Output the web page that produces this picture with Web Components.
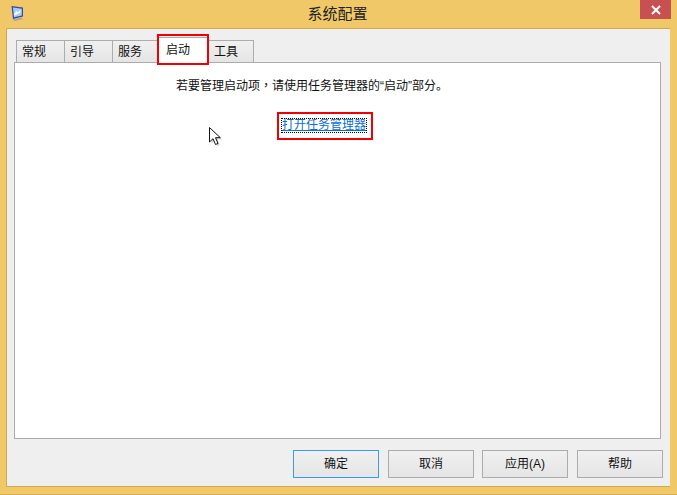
<!DOCTYPE html>
<html lang="zh-CN">
<head>
<meta charset="utf-8">
<title>系统配置</title>
<style>
  html, body { margin: 0; padding: 0; }
  body { width: 677px; height: 495px; overflow: hidden; font: 12px "Liberation Sans", "Noto Sans CJK SC", sans-serif; color: #111; }
</style>
</head>
<body>
<config-window caption="系统配置">
  <tab-strip slot="tabs">
    <tab-item>常规</tab-item>
    <tab-item>引导</tab-item>
    <tab-item>服务</tab-item>
    <tab-item selected marked>启动</tab-item>
    <tab-item>工具</tab-item>
  </tab-strip>
  <startup-panel slot="panel"></startup-panel>
  <dialog-button slot="buttons" primary>确定</dialog-button>
  <dialog-button slot="buttons">取消</dialog-button>
  <dialog-button slot="buttons">应用(A)</dialog-button>
  <dialog-button slot="buttons">帮助</dialog-button>
</config-window>

<script>
class ConfigWindow extends HTMLElement {
    constructor() {
        super();
        this.attachShadow({ mode: 'open' });
    }

    connectedCallback() {
        this.shadowRoot.innerHTML = `
            <style>
                :host {
                    display: flex;
                    flex-direction: column;
                    width: 677px;
                    height: 495px;
                    box-sizing: border-box;
                    background: #f0c868;
                    border-bottom: 1px solid #d8ae55;
                }
                .title {
                    display: flex;
                    align-items: flex-start;
                    height: 28px;
                    flex: none;
                }
                .icon { width: 16px; height: 17px; margin: 5px 0 0 9px; flex: none; }
                .caption {
                    flex: 1;
                    text-align: center;
                    font-size: 15px;
                    line-height: 27px;
                    color: #222;
                    padding-left: 10px;
                }
                .close {
                    width: 31px;
                    height: 19px;
                    margin-right: 6px;
                    flex: none;
                    background: #c75050;
                    display: flex;
                    align-items: center;
                    justify-content: center;
                }
                .client {
                    flex: none;
                    height: 459px;
                    margin: 0 7px 0 6px;
                    box-sizing: border-box;
                    background: #efefef;
                    border: 1px solid #cfa755;
                    border-width: 1px 0 1px 1px;
                    padding: 10px 10px 0 7px;
                    display: flex;
                    flex-direction: column;
                }
                .buttons {
                    display: flex;
                    justify-content: flex-end;
                    gap: 9px;
                    margin: 11px -3px 0 0;
                }
            </style>
            <div class="title">
                <svg class="icon" viewBox="0 0 16 17">
                    <path d="M2.5 1 14 2.5v9L4 14z" fill="#3448b0"/>
                    <path d="M4 2.6 12.8 3.7v6.8L5 12.2z" fill="#a9cdf2"/>
                    <path d="M5 9l2.5-3 1.5 1.2 2.5-2.4v2.6L5.4 10.8z" fill="#f4f8fc"/>
                    <path d="M3.5 14.5l9-1.7 1.5 1.3-8.500 1.900z" fill="#a3a3ac"/>
                </svg>
                <div class="caption">${this.getAttribute('caption')}</div>
                <div class="close">
                    <svg width="10" height="10" viewBox="0 0 10 10">
                        <path d="M1 1l8 8M9 1l-8 8" stroke="#fff" stroke-width="2" fill="none"/>
                    </svg>
                </div>
            </div>
            <div class="client">
                <slot name="tabs"></slot>
                <slot name="panel"></slot>
                <div class="buttons"><slot name="buttons"></slot></div>
            </div>
        `;
    }
}

class TabStrip extends HTMLElement {
    constructor() {
        super();
        this.attachShadow({ mode: 'open' });
    }

    connectedCallback() {
        this.shadowRoot.innerHTML = `
            <style>
                :host {
                    display: flex;
                    align-items: flex-end;
                    height: 23px;
                    padding-left: 2px;
                    position: relative;
                    z-index: 1;
                }
            </style>
            <slot></slot>
        `;
    }
}

class TabItem extends HTMLElement {
    constructor() {
        super();
        this.attachShadow({ mode: 'open' });
    }

    connectedCallback() {
        this.shadowRoot.innerHTML = `
            <style>
                :host {
                    display: block;
                    position: relative;
                    box-sizing: border-box;
                    height: 22px;
                    width: 49px;
                    margin-right: -1px;
                    background: linear-gradient(#f0f0f0, #e5e5e5);
                    border: 1px solid #acacac;
                    border-bottom: 0;
                    line-height: 23px;
                    padding-left: 5px;
                }
                :host(:last-child) { width: 46px; }
                :host([selected]) {
                    height: 26px;
                    width: 52px;
                    margin: 0 -1px 0 -3px;
                    background: #fff;
                    padding-left: 8px;
                    line-height: 24px;
                    top: 1px;
                    z-index: 2;
                }
                .mark {
                    display: none;
                    position: absolute;
                    left: -1px;
                    top: -4px;
                    width: 52px;
                    height: 31px;
                    box-sizing: border-box;
                    border: 2px solid #f00000;
                }
                :host([marked]) .mark { display: block; }
            </style>
            <slot></slot><span class="mark"></span>
        `;
    }
}

class StartupPanel extends HTMLElement {
    constructor() {
        super();
        this.attachShadow({ mode: 'open' });
    }

    connectedCallback() {
        this.shadowRoot.innerHTML = `
            <style>
                :host {
                    display: block;
                    position: relative;
                    box-sizing: border-box;
                    height: 377px;
                    width: 647px;
                    background: #fff;
                    border: 1px solid #acacac;
                }
                .note { margin: 13px 0 0 161px; line-height: 18px; white-space: nowrap; }
                .note span { font-family: "Noto Sans CJK TC", sans-serif; }
                .link-box {
                    display: inline-block;
                    position: relative;
                    margin: 23px 0 0 266px;
                    line-height: 15px;
                    color: #0a6cd6;
                    text-decoration: underline;
                    outline: 1px dotted #000;
                    outline-offset: -1px;
                    padding: 0 1px;
                }
                .mark {
                    position: absolute;
                    left: -4px;
                    top: -6px;
                    width: 96px;
                    height: 28px;
                    box-sizing: border-box;
                    border: 2px solid #f00000;
                }
                .cursor { position: absolute; left: 194px; top: 64px; }
            </style>
            <div class="note">若要管理启动项<span lang="zh-TW">，</span>请使用任务管理器的“启动”部分。</div>
            <a class="link-box">打开任务管理器<span class="mark"></span></a>
            <svg class="cursor" width="16" height="21" viewBox="0 0 16 21">
                <path d="M2.500 2.500v14l3.400-3.200 2.400 5.600 2.500-1-2.400-5.600h4.600z" fill="#bdbdbd" opacity=".7"/>
                <path d="M.5.5v14.500l3.500-3.300 2.500 5.800 2.500-1.100-2.500-5.700h4.800z" fill="#fff" stroke="#111" stroke-width="1"/>
            </svg>
        `;
    }
}

class DialogButton extends HTMLElement {
    constructor() {
        super();
        this.attachShadow({ mode: 'open' });
    }

    connectedCallback() {
        this.shadowRoot.innerHTML = `
            <style>
                :host {
                    display: block;
                    box-sizing: border-box;
                    width: 86px;
                    height: 28px;
                    background: linear-gradient(#f0f0f0, #e5e5e5);
                    border: 1px solid #acacac;
                    text-align: center;
                    line-height: 26px;
                }
                :host(:nth-child(5)) { margin-left: -1px; }
                :host([primary]) { border-color: #3c9bf0; }
            </style>
            <slot></slot>
        `;
    }
}

customElements.define('config-window', ConfigWindow);
customElements.define('tab-strip', TabStrip);
customElements.define('tab-item', TabItem);
customElements.define('startup-panel', StartupPanel);
customElements.define('dialog-button', DialogButton);
</script>
</body>
</html>
